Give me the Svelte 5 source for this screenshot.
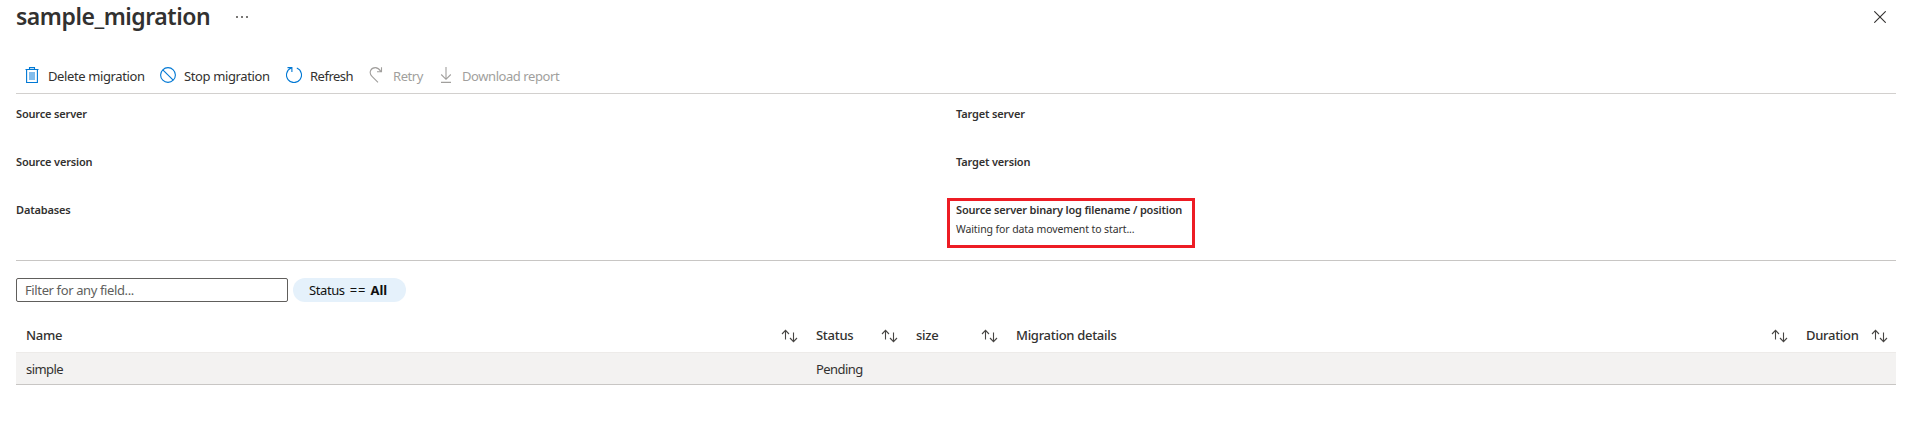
<script>
  const commands = [
    { label: 'Delete migration', icon: 'delete', width: 136, spacing: -0.39 },
    { label: 'Stop migration', icon: 'stop', width: 126, spacing: -0.37 },
    { label: 'Refresh', icon: 'refresh', width: 83, spacing: -0.5 },
    { label: 'Retry', icon: 'retry', width: 69, spacing: -0.45, disabled: true },
    { label: 'Download report', icon: 'download', width: 130, spacing: -0.43, disabled: true }
  ];
  const properties = [
    { label: 'Source server' },
    { label: 'Target server' },
    { label: 'Source version' },
    { label: 'Target version' },
    { label: 'Databases' },
    { label: 'Source server binary log filename / position', value: 'Waiting for data movement to start...' }
  ];
  const columns = [
    { label: 'Name', cell: 'simple' },
    { label: 'Status', cell: 'Pending' },
    { label: 'size', cell: '' },
    { label: 'Migration details', cell: '' },
    { label: 'Duration', cell: '' }
  ];
</script>

<main>
  <header>
    <h1>sample_migration</h1>
    <button class="more" aria-label="More"><i></i><i></i><i></i></button>
    <button class="close" aria-label="Close">
      <svg width="12" height="12" viewBox="0 0 12 12"><path d="M.3.3l11.4 11.4M11.7.3L.3 11.7" stroke="#323130" stroke-width="1.1" /></svg>
    </button>
  </header>

  <nav>
    {#each commands as command}
      <button class="command" class:disabled={command.disabled} style:width="{command.width}px">
        <svg width="16" height="16" viewBox="0 0 16 16" fill="none" stroke="currentColor">
          {#if command.icon === 'delete'}
            <path d="M5 5h6v8H5z" fill="#83bdec" stroke="none" />
            <path d="M1.5 2.5h13M5.5 2V.6h5V2M2.6 2.5v13h10.8v-13" stroke-width="1.1" />
          {:else if command.icon === 'stop'}
            <circle cx="8" cy="8" r="7.4" stroke-width="1.1" />
            <path d="M2.8 2.8l10.4 10.4" stroke-width="1.1" />
          {:else if command.icon === 'refresh'}
            <path d="M10.8 1.1A7.5 7.5 0 1 1 5.2 1.1M1.5.6h4.4V5" stroke-width="1.1" />
          {:else if command.icon === 'retry'}
            <path d="M9 15.4L3 9.4C-.8 5.5 2 .6 6.4.6c2.2 0 3.7 1.2 5.6 3.9M12.5.3v4.5H8" stroke-width="1.1" />
          {:else}
            <path d="M8 0v12.2M3.2 7.5L8 12.3l4.8-4.8M3 15.4h10" stroke-width="1.1" />
          {/if}
        </svg>
        <span style:letter-spacing="{command.spacing}px">{command.label}</span>
      </button>
    {/each}
  </nav>

  <dl>
    {#each properties as property}
      <div class:highlight={property.value}>
        <dt>{property.label}</dt>
        {#if property.value}<dd>{property.value}</dd>{/if}
      </div>
    {/each}
  </dl>

  <section class="filters">
    <input type="text" placeholder="Filter for any field..." />
    <button class="pill"><span>Status</span><span class="op">==</span><b>All</b></button>
  </section>

  <div class="grid head">
    {#each columns as column}
      <div class="cell">
        <span>{column.label}</span>
        <svg width="18" height="14" viewBox="0 0 18 14" fill="none" stroke="#484644" stroke-width="1.1">
          <path d="M4.5 10.5V1.7M1 5l3.5-3.6L8 5M12.5 3.5v8.8M9 9l3.5 3.6L16 9" />
        </svg>
      </div>
    {/each}
  </div>
  <div class="grid row">
    {#each columns as column}
      <div class="cell">{column.cell}</div>
    {/each}
  </div>
</main>

<style>
  :global(body) {
    margin: 0;
    background: #fff;
  }
  main {
    box-sizing: border-box;
    height: 446px;
    padding: 0 12px 0 16px;
    overflow: hidden;
    color: #323130;
    font: 13px/18px "Noto Sans", sans-serif;
  }
  button {
    padding: 0;
    border: 0;
    background: none;
    color: inherit;
    font: inherit;
  }
  header {
    display: flex;
    align-items: center;
    height: 34px;
  }
  h1 {
    margin: 0;
    width: 220px;
    font-size: 23px;
    font-weight: 600;
    line-height: 32px;
    height: 34px;
    letter-spacing: -0.47px;
  }
  .more {
    display: flex;
    gap: 3px;
  }
  .more i {
    width: 2px;
    height: 2px;
    background: #797775;
  }
  .close {
    display: flex;
    margin-left: auto;
    margin-right: 10px;
  }
  nav {
    display: flex;
    box-sizing: border-box;
    height: 60px;
    padding: 24px 0 0 8px;
    border-bottom: 1px solid #d2d0ce;
  }
  .command {
    display: flex;
    align-items: center;
    gap: 8px;
    height: 34px;
    white-space: nowrap;
  }
  .command svg {
    flex: none;
    color: #0078d4;
  }
  .command span {
    padding-top: 2px;
  }
  .disabled,
  .command.disabled svg {
    color: #a19f9d;
  }
  dl {
    display: grid;
    grid-template-columns: 1fr 1fr;
    grid-template-rows: repeat(3, 48px);
    box-sizing: border-box;
    height: 167px;
    margin: 0;
    padding-top: 12px;
    border-bottom: 1px solid #c8c6c4;
    font-size: 11px;
    line-height: 16px;
  }
  dt {
    font-weight: 600;
    letter-spacing: -0.17px;
  }
  dd {
    margin: 3px 0 0;
    font-size: 10.5px;
    letter-spacing: -0.1px;
  }
  .highlight {
    box-sizing: border-box;
    width: 248px;
    height: 50px;
    margin: -4px 0 0 -9px;
    padding: 1px 6px;
    border: 3px solid #ed1c24;
    white-space: nowrap;
  }
  .filters {
    display: flex;
    gap: 5px;
    padding-top: 17px;
  }
  input {
    box-sizing: border-box;
    width: 272px;
    height: 24px;
    padding: 0 8px 1px;
    border: 1px solid #605e5c;
    border-radius: 2px;
    font: inherit;
    letter-spacing: -0.38px;
  }
  input::placeholder {
    color: #605e5c;
  }
  .pill {
    display: flex;
    align-items: center;
    box-sizing: border-box;
    width: 113px;
    height: 24px;
    padding-left: 16px;
    border-radius: 12px;
    background: #e5f1fb;
    color: #111;
    letter-spacing: -0.4px;
  }
  .pill .op {
    margin: 0 4px 0 5px;
    letter-spacing: 1px;
  }
  .pill b {
    font-weight: 700;
    letter-spacing: -0.1px;
  }
  .grid {
    display: grid;
    grid-template-columns: 790px 100px 100px 790px 100px;
    box-sizing: border-box;
  }
  .head {
    height: 50px;
    padding-top: 18px;
    font-weight: 500;
    letter-spacing: -0.29px;
  }
  .cell {
    display: flex;
    justify-content: space-between;
    align-items: center;
    height: 32px;
    padding-left: 10px;
    white-space: nowrap;
  }
  .head .cell span {
    padding-bottom: 2px;
  }
  .cell svg {
    margin-right: 7px;
  }
  .row {
    height: 33px;
    border-top: 1px solid #edebe9;
    border-bottom: 1px solid #c8c6c4;
    background: #f3f2f1;
    letter-spacing: -0.55px;
  }
</style>
